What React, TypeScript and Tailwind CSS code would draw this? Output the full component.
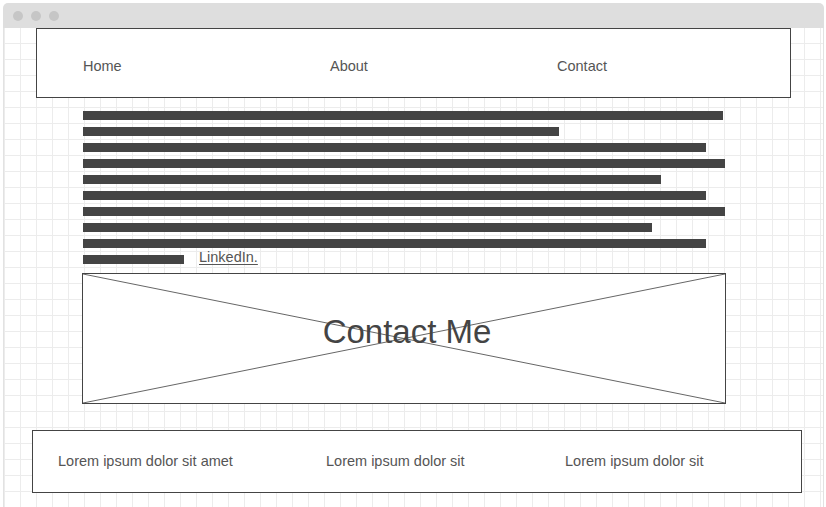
const bars = [640, 476, 623, 642, 578, 623, 642, 569, 623];

const navLinks = [
  { label: "Home", width: "w-[247px]" },
  { label: "About", width: "w-[227px]" },
  { label: "Contact", width: "" },
];

const footerItems = [
  { label: "Lorem ipsum dolor sit amet", width: "w-[268px]" },
  { label: "Lorem ipsum dolor sit", width: "w-[239px]" },
  { label: "Lorem ipsum dolor sit", width: "" },
];

export default function App() {
  return (
    <div className="h-[507px] w-[826px] overflow-hidden bg-white pl-[3px] pt-[3px] font-['Liberation_Sans',Arial,sans-serif]">
      <div className="flex h-[520px] w-[821px] flex-col">
        {/* window chrome */}
        <div className="flex h-[25px] items-center gap-[8px] rounded-t-[5px] bg-[#dedede] pl-[10px]">
          <span className="h-[10px] w-[10px] rounded-full bg-[#c6c6c6]" />
          <span className="h-[10px] w-[10px] rounded-full bg-[#c6c6c6]" />
          <span className="h-[10px] w-[10px] rounded-full bg-[#c6c6c6]" />
        </div>

        <div className="flex-1 border-x border-[#e2e2e2] bg-white bg-[linear-gradient(to_right,#ececec_1px,transparent_1px),linear-gradient(to_bottom,#ececec_1px,transparent_1px)] bg-[size:16px_16px] bg-[position:0_-1px]">
          {/* nav */}
          <nav className="ml-[32px] flex h-[70px] w-[755px] items-center border border-[#444] bg-white pl-[46px] pt-[7px] text-[14.5px] text-[#555]">
            {navLinks.map((link) => (
              <span key={link.label} className={link.width}>
                {link.label}
              </span>
            ))}
          </nav>

          {/* paragraph placeholder */}
          <div className="ml-[79px] mt-[13px] flex flex-col gap-[7px]">
            {bars.map((w, i) => (
              <div key={i} className="h-[9px] bg-[#444]" style={{ width: w }} />
            ))}
            <div className="flex h-[9px] items-center">
              <div className="h-[9px] w-[101px] bg-[#444]" />
              <a className="ml-[15px] -mt-[5px] text-[14.5px] leading-none text-[#555] underline underline-offset-2">LinkedIn.</a>
            </div>
          </div>

          {/* contact image placeholder */}
          <div className="relative ml-[78px] mt-[9px] flex h-[131px] w-[644px] items-center justify-center border border-[#444] bg-white">
            <svg className="absolute inset-0 h-full w-full" viewBox="0 0 642 129" preserveAspectRatio="none">
              <line x1="0" y1="0" x2="642" y2="129" stroke="#666" strokeWidth="1" />
              <line x1="642" y1="0" x2="0" y2="129" stroke="#666" strokeWidth="1" />
            </svg>
            <span className="relative -mt-[14px] ml-[6px] text-[33px] text-[#444]">Contact Me</span>
          </div>

          {/* footer */}
          <footer className="ml-[28px] mt-[26px] flex h-[63px] w-[770px] items-center border border-[#444] bg-white pl-[25px] pt-[1px] text-[14.5px] text-[#555]">
            {footerItems.map((item, i) => (
              <span key={i} className={item.width}>
                {item.label}
              </span>
            ))}
          </footer>
        </div>
      </div>
    </div>
  );
}
